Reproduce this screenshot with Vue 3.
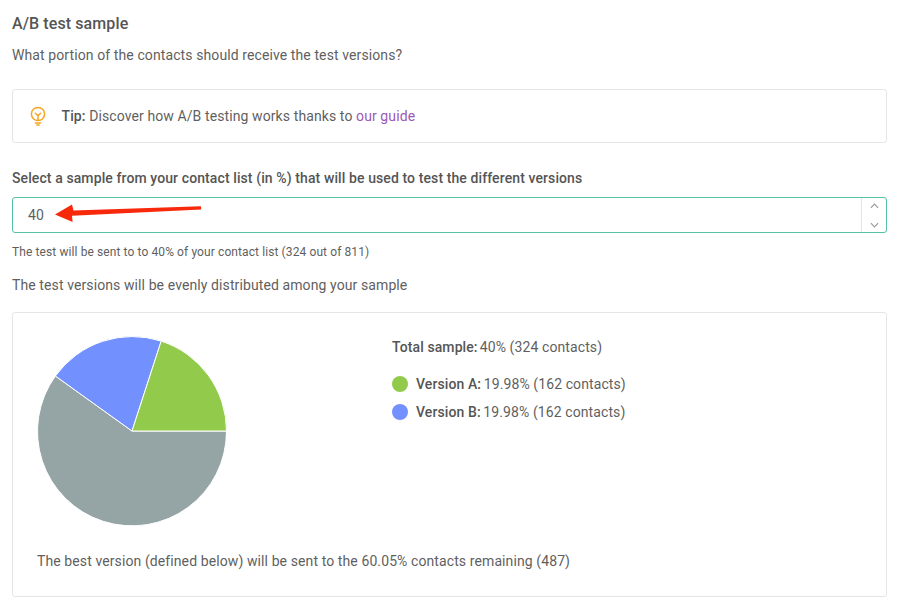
<script setup>
const legend = [
  { name: 'Version A:', value: '19.98% (162 contacts)', color: '#92cb4b' },
  { name: 'Version B:', value: '19.98% (162 contacts)', color: '#7390ff' }
]
</script>

<template>
  <main class="page">
    <h2 class="title">A/B test sample</h2>
    <p class="intro">What portion of the contacts should receive the test versions?</p>

    <div class="tip">
      <svg class="bulb" viewBox="0 0 18 20" width="18" height="20" fill="none" stroke="#f5a623" stroke-width="1.5" stroke-linecap="round" stroke-linejoin="round">
        <circle cx="9" cy="8" r="6.6" />
        <path d="M6.3 7.2 9 9.6l2.7-2.4M9 9.6v4.6M6.4 17h5.2M7.8 19h2.4" />
      </svg>
      <span><strong>Tip:</strong> Discover how A/B testing works thanks to <a class="link">our guide</a></span>
    </div>

    <label class="field-label">Select a sample from your contact list (in %) that will be used to test the different versions</label>
    <div class="input">
      <span class="value">40</span>
      <div class="stepper">
        <svg viewBox="0 0 10 6" width="9" height="6" fill="none" stroke="#9a9a9a" stroke-width="1.3"><path d="M1 5l4-4 4 4" /></svg>
        <svg viewBox="0 0 10 6" width="9" height="6" fill="none" stroke="#9a9a9a" stroke-width="1.3"><path d="M1 1l4 4 4-4" /></svg>
      </div>
      <svg class="arrow" viewBox="0 0 150 20" width="150" height="20">
        <path d="M146 3.2 18.5 7.6 17 1.5 0 11.5l17.6 7.6-.6-6.3 129.2-6.2z" fill="#f8290b" />
      </svg>
    </div>
    <p class="helper">The test will be sent to to 40% of your contact list (324 out of 811)</p>
    <p class="even">The test versions will be evenly distributed among your sample</p>

    <section class="card">
      <div class="chart-row">
        <svg class="pie" viewBox="0 0 190 190" width="190" height="190">
          <g stroke="#fff" stroke-width="1">
            <path d="M95 95 L189.5 95 A94.5 94.5 0 1 1 18.4 40 Z" fill="#95a5a6" />
            <path d="M95 95 L18.4 40 A94.5 94.5 0 0 1 124.2 5.1 Z" fill="#7390ff" />
            <path d="M95 95 L124.2 5.1 A94.5 94.5 0 0 1 189.5 95 Z" fill="#92cb4b" />
          </g>
        </svg>
        <div class="summary">
          <p class="total"><strong>Total sample:</strong> 40% (324 contacts)</p>
          <ul class="legend">
            <li v-for="item in legend" :key="item.name" class="legend-item">
              <span class="dot" :style="{ background: item.color }"></span>
              <span><strong>{{ item.name }}</strong> {{ item.value }}</span>
            </li>
          </ul>
        </div>
      </div>
      <p class="best">The best version (defined below) will be sent to the 60.05% contacts remaining (487)</p>
    </section>
  </main>
</template>

<style scoped>
.page {
  width: 875px;
  height: 606px;
  padding: 0 13px 0 12px;
  box-sizing: content-box;
  font-family: Roboto, "Liberation Sans", sans-serif;
  font-size: 14px;
  color: #5f5f5f;
  background: #fff;
  overflow: hidden;
  letter-spacing: 0.1px;
}
p, h2, ul { margin: 0; padding: 0; }
strong { font-weight: 500; color: #555; }
.title {
  padding-top: 14px;
  font-size: 16px;
  line-height: 20px;
  font-weight: 500;
  color: #555;
}
.intro { margin-top: 11px; line-height: 20px; }
.tip {
  display: flex;
  align-items: center;
  gap: 14.5px;
  height: 54px;
  box-sizing: border-box;
  margin-top: 24px;
  padding-left: 16px;
  border: 1px solid #e6e6e6;
  border-radius: 3px;
}
.link { color: #9b59b6; }
.field-label {
  display: block;
  margin-top: 25px;
  line-height: 20px;
  font-weight: 500;
  color: #555;
}
.input {
  position: relative;
  display: flex;
  align-items: center;
  justify-content: space-between;
  height: 36px;
  box-sizing: border-box;
  margin-top: 9px;
  padding-left: 15px;
  border: 1px solid #55c2a8;
  border-radius: 3px;
}
.stepper {
  display: flex;
  flex-direction: column;
  align-items: center;
  justify-content: center;
  gap: 13px;
  width: 24px;
  height: 100%;
  border-left: 1px solid #e4e4e4;
}
.arrow { position: absolute; left: 42px; top: 5px; }
.helper { margin-top: 11px; font-size: 12px; line-height: 16px; }
.even { margin-top: 15px; line-height: 20px; }
.card {
  height: 285px;
  box-sizing: border-box;
  margin-top: 17px;
  padding: 23px 24px 0;
  border: 1px solid #e6e6e6;
  border-radius: 3px;
}
.chart-row { display: flex; }
.pie { flex: none; }
.summary { margin-left: 165px; padding-top: 1px; }
.total { line-height: 20px; }
.total strong { margin-right: -1.5px; }
.legend-item strong { margin-right: -1px; }
.legend { list-style: none; margin-top: 12.5px; }
.legend-item {
  display: flex;
  align-items: center;
  gap: 8px;
  height: 28px;
}
.dot { width: 16px; height: 16px; border-radius: 50%; flex: none; }
.best { margin-top: 25px; line-height: 20px; }
</style>
